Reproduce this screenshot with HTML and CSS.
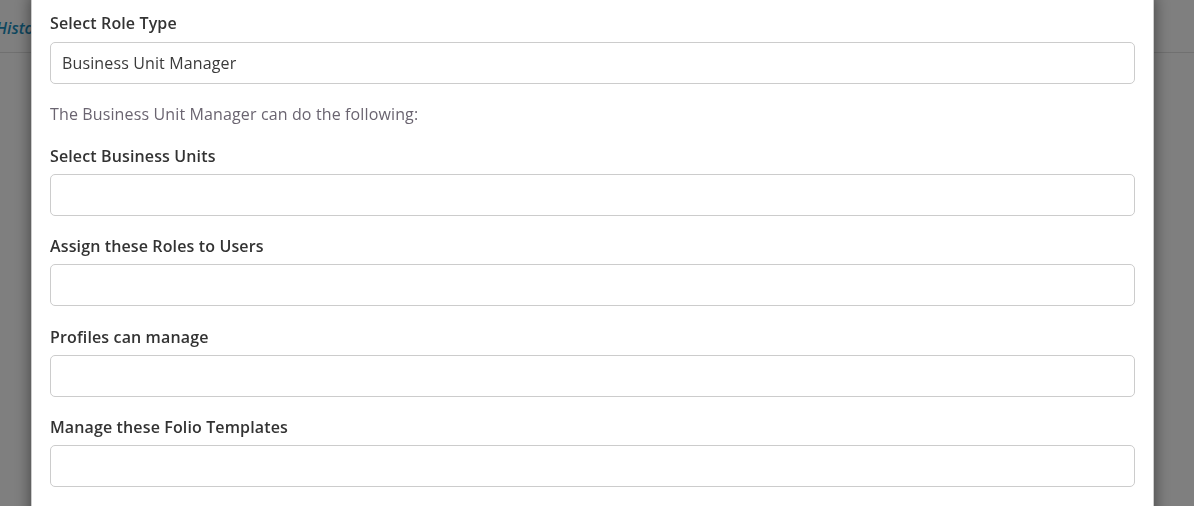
FILE: index.html
```html
<!DOCTYPE html>
<html>
<head>
<meta charset="utf-8">
<link rel="stylesheet" href="styles.css">
</head>
<body>
<div class="page">
  <div class="tabs">
    <a class="tab-link">History</a>
  </div>
</div>
<div class="backdrop"></div>
<div class="modal">
  <div class="modal-body">
    <div class="group first">
      <label class="label">Select Role Type</label>
      <div class="input">Business Unit Manager</div>
    </div>
    <p class="note">The Business Unit Manager can do the following:</p>
    <div class="group">
      <label class="label">Select Business Units</label>
      <div class="input"></div>
    </div>
    <div class="group">
      <label class="label">Assign these Roles to Users</label>
      <div class="input"></div>
    </div>
    <div class="group">
      <label class="label">Profiles can manage</label>
      <div class="input"></div>
    </div>
    <div class="group">
      <label class="label">Manage these Folio Templates</label>
      <div class="input"></div>
    </div>
  </div>
</div>
</body>
</html>
```

FILE: styles.css
```css
html, body {
  margin: 0;
  padding: 0;
  height: 100%;
  overflow: hidden;
  background: #ffffff;
  font-family: "Open Sans", "Liberation Sans", sans-serif;
}

.page {
  height: 100%;
}

.tabs {
  height: 52px;
  border-bottom: 1px solid #e0e0e0;
  display: flex;
  align-items: center;
  margin-left: -4px;
}

.tab-link {
  font-style: italic;
  font-weight: 600;
  font-size: 16px;
  color: #1c8fbf;
  margin-top: 4px;
}

.backdrop {
  position: fixed;
  inset: 0;
  background: rgba(0, 0, 0, 0.5);
}

.modal {
  position: fixed;
  left: 31px;
  top: -10px;
  width: 1123px;
  height: 600px;
  box-sizing: border-box;
  background: #ffffff;
  border: 1px solid rgba(0, 0, 0, 0.2);
  box-shadow: 0 5px 15px rgba(0, 0, 0, 0.5);
}

.modal-body {
  padding: 20px 18px 0 18px;
  letter-spacing: 0.13px;
}

.group {
  display: flex;
  flex-direction: column;
  margin-bottom: 18.4px;
}

.group.first {
  margin-bottom: 0;
}

.label {
  font-size: 16px;
  line-height: 24px;
  font-weight: 600;
  color: #333333;
  margin-bottom: 6px;
}

.group.first .label {
  margin-bottom: 7px;
}

.input {
  height: 42px;
  box-sizing: border-box;
  border: 1px solid #cccccc;
  border-radius: 5px;
  padding: 0 11px;
  font-size: 16px;
  line-height: 40px;
  color: #3a3a3a;
}

.note {
  margin: 18px 0 18px 0;
  font-size: 16px;
  line-height: 24px;
  color: #6a6470;
}
```
